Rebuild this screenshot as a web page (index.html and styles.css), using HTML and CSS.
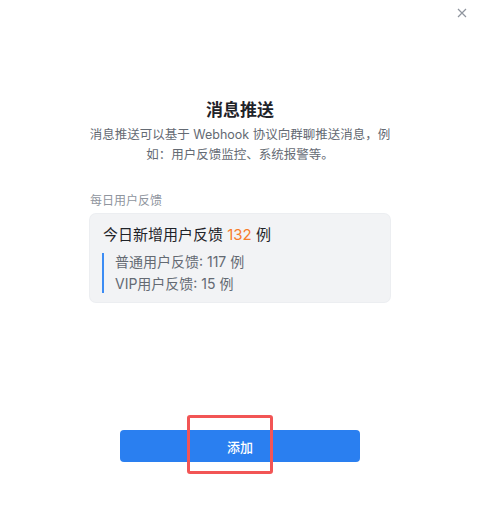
FILE: index.html
```html
<!DOCTYPE html>
<html lang="zh">
<head>
<meta charset="utf-8">
<link rel="stylesheet" href="styles.css">
</head>
<body>
<div class="dialog">
  <button class="close" aria-label="关闭">
    <svg width="10" height="10" viewBox="0 0 10 10"><path d="M1 1L9 9M9 1L1 9" stroke="#8f959e" stroke-width="1.2" fill="none"/></svg>
  </button>
  <div class="content">
    <h1 class="title">消息推送</h1>
    <p class="desc">消息推送可以基于 Webhook 协议向群聊推送消息，例如：用户反馈监控、系统报警等。</p>
    <div class="label">每日用户反馈</div>
    <div class="card">
      <div class="headline">今日新增用户反馈 <span class="num">132</span> 例</div>
      <div class="details">
        <div>普通用户反馈: 117 例</div>
        <div>VIP用户反馈: 15 例</div>
      </div>
    </div>
  </div>
  <div class="actions">
    <button class="add">添加</button>
    <span class="highlight"></span>
  </div>
</div>
</body>
</html>
```
FILE: styles.css
```css
* { box-sizing: border-box; }
html, body { margin: 0; padding: 0; }
body {
  width: 480px;
  height: 530px;
  background: #ffffff;
  font-family: Inter, "Noto Sans CJK SC", sans-serif;
  color: #1f2329;
}
.dialog {
  position: relative;
  width: 480px;
  height: 530px;
  display: flex;
  flex-direction: column;
  align-items: center;
}
.close {
  position: absolute;
  top: 7px;
  right: 12px;
  width: 12px;
  height: 12px;
  padding: 1px;
  border: 0;
  background: none;
  display: flex;
}
.content {
  width: 300px;
  margin-top: 97px;
  display: flex;
  flex-direction: column;
}
.title {
  margin: 0;
  font-size: 17px;
  line-height: 26px;
  font-weight: 700;
  text-align: center;
  color: #1f2329;
}
.desc {
  margin: 2px -5px 0;
  font-size: 12.5px;
  line-height: 20px;
  text-align: center;
  color: #646a73;
}
.label {
  margin-top: 27px;
  font-size: 12px;
  line-height: 18px;
  color: #8f959e;
}
.card {
  margin-top: 4px;
  height: 88px;
  background: #f2f3f5;
  border-radius: 6px;
  padding: 10px 14px 0 12px;
  box-shadow: 0 0 0 1px #eceef1;
}
.headline {
  padding-left: 1px;
  font-size: 15px;
  line-height: 22px;
  color: #1f2329;
}
.num { color: #f77d2c; }
.details {
  margin-top: 7px;
  border-left: 2px solid #3c8cf4;
  padding-left: 11px;
  display: flex;
  flex-direction: column;
  gap: 4px;
  font-size: 14px;
  line-height: 18px;
  color: #646a73;
}
.actions {
  position: relative;
  margin-top: 128px;
  width: 240px;
}
.add {
  display: block;
  width: 240px;
  height: 32px;
  border: 0;
  border-radius: 4px;
  background: #2a7ff0;
  color: #ffffff;
  font-family: inherit;
  font-size: 13px;
  font-weight: 500;
  cursor: pointer;
}
.highlight {
  position: absolute;
  left: 67px;
  top: -15px;
  width: 86px;
  height: 59px;
  border: 3px solid #f25555;
  border-radius: 3px;
  pointer-events: none;
}
```
